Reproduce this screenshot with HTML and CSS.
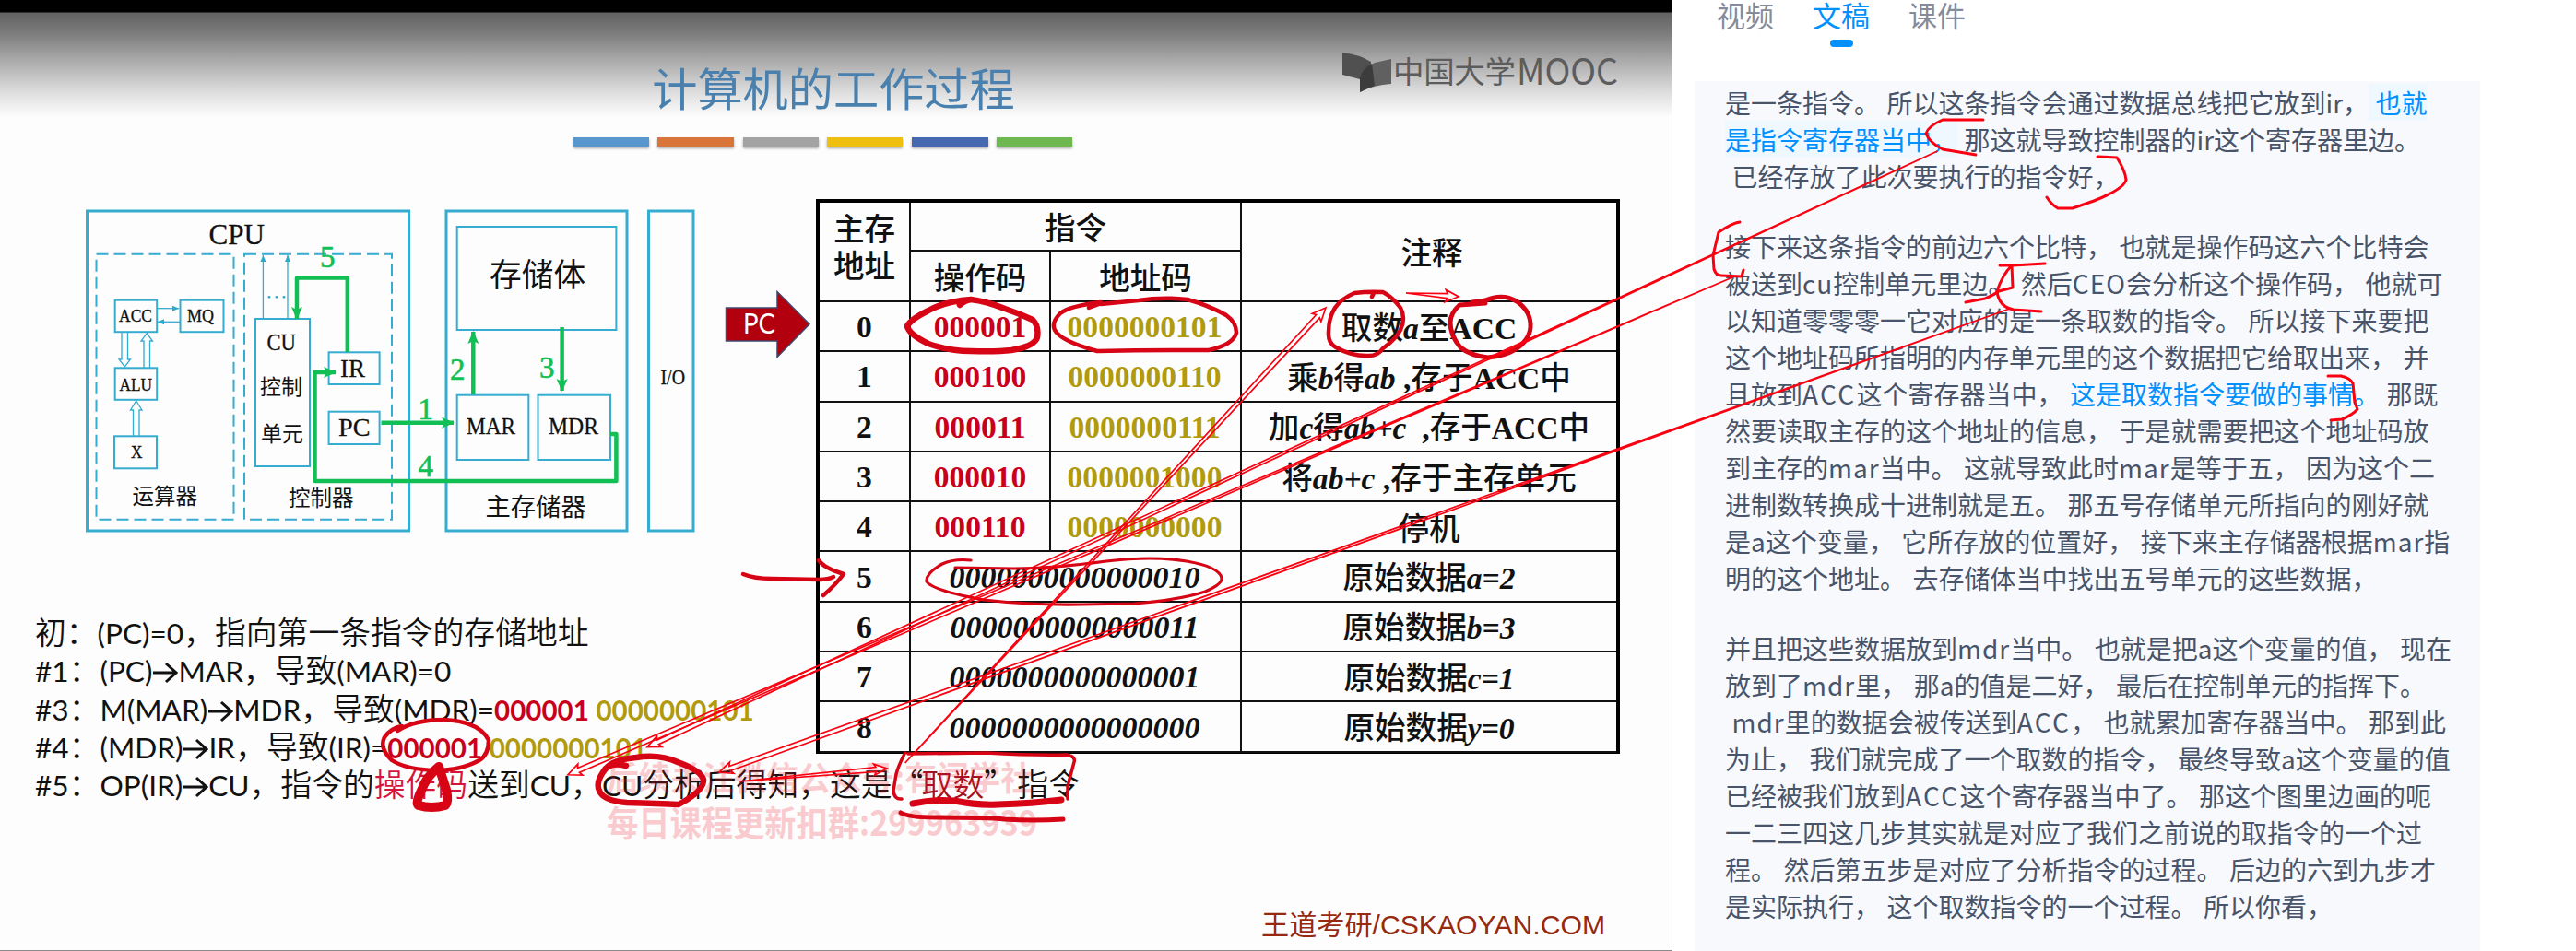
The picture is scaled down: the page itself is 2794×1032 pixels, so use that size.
FILE: index.html
```html
<!DOCTYPE html>
<html lang="zh-CN">
<head>
<meta charset="utf-8">
<title>计算机的工作过程</title>
<link rel="stylesheet" href="styles.css">
</head>
<body>
<main class="page">
  <section class="slide">
    <header class="slide-head">
      <h1 class="title">计算机的工作过程</h1>
      <svg class="logo" width="304" height="50" viewBox="1454 54 304 50">
        <path d="M1456 57Q1474 59 1487 67V88L1475 86L1456 81Z" fill="#505050"/>
        <path d="M1475 84Q1479 73 1491 68L1509 64V91Q1490 92 1475 100Z" fill="#606060"/>
        <path d="M1475 84Q1479 73 1488 69L1491 93Q1484 95 1475 100Z" fill="#3c3c3c"/>
        <text class="logo-text" x="1511" y="90" font-size="33.5" textLength="133">中国大学</text>
        <text class="logo-text" x="1645" y="92" font-size="39" textLength="110" lengthAdjust="spacingAndGlyphs">MOOC</text>
      </svg>
    </header>
    <div class="bars"><i class="b1"></i><i class="b2"></i><i class="b3"></i><i class="b4"></i><i class="b5"></i><i class="b6"></i></div>

    <div class="stage">
      <div class="left">
        <svg class="diagram" width="700" height="400" viewBox="60 216 700 400">
          <defs>
            <marker id="gh" markerUnits="userSpaceOnUse" markerWidth="16" markerHeight="14" refX="13" refY="6" orient="auto"><path d="M0 0L14 6L0 12L3 6Z" fill="#12bf55"/></marker>
            <marker id="bh" markerUnits="userSpaceOnUse" markerWidth="8" markerHeight="8" refX="7" refY="3" orient="auto"><path d="M0 0L7 3L0 6Z" fill="#2fa9c9"/></marker>
          </defs>
          <g class="box thick">
            <rect x="94.5" y="229" width="349" height="347"/><rect x="484" y="229" width="196" height="347"/><rect x="703.500" y="229" width="48.500" height="347"/>
          </g>
          <g class="box dashed"><rect x="104.500" y="275.700" width="149" height="288"/><rect x="265" y="275.700" width="160" height="288"/></g>
          <g class="box">
            <rect x="124.700" y="325.700" width="45.500" height="34.500"/><rect x="195.500" y="325.700" width="47" height="34.500"/>
            <rect x="124.700" y="399.300" width="45.500" height="34.500"/><rect x="124" y="473.300" width="46" height="35"/>
            <rect x="277" y="346" width="59" height="160"/><rect x="356.600" y="382.300" width="55" height="34.700"/><rect x="356.600" y="446.700" width="55" height="35.300"/>
            <rect x="495.700" y="246" width="172.700" height="112"/><rect x="495.700" y="428.700" width="77.600" height="70.300"/><rect x="583.500" y="428.700" width="78.500" height="70.300"/>
          </g>
          <g class="box thin">
            <path d="M285.400 346V277" marker-end="url(#bh)"/><path d="M312 346V277" marker-end="url(#bh)"/><path d="M170 334.700H194" marker-end="url(#bh)"/><path d="M195 349.300H171" marker-end="url(#bh)"/>
            <path d="M132 361V390H129L135.300 398L141.500 390H138.500V361M156 399V370H153L159.300 361.500L165.500 370H162.500V399M144.500 473V445H141.500L147.700 435L154 445H151V473"/>
          </g>
          <g fill="#2fa9c9"><circle cx="292" cy="322.300" r="1.400"/><circle cx="300" cy="322.300" r="1.400"/><circle cx="308" cy="322.300" r="1.400"/></g>
          <g class="lbl">
            <text x="226.500" y="265" font-size="32" textLength="60.500" lengthAdjust="spacingAndGlyphs">CPU</text>
            <text x="129" y="349" font-size="19" textLength="36" lengthAdjust="spacingAndGlyphs">ACC</text>
            <text x="203" y="349" font-size="19" textLength="29" lengthAdjust="spacingAndGlyphs">MQ</text>
            <text x="129.500" y="423.500" font-size="19" textLength="35.500" lengthAdjust="spacingAndGlyphs">ALU</text>
            <text x="142" y="497" font-size="19" textLength="12.500" lengthAdjust="spacingAndGlyphs">X</text>
            <text x="289.500" y="379.500" font-size="25" textLength="31.500" lengthAdjust="spacingAndGlyphs">CU</text>
            <text x="369" y="409" font-size="28" textLength="27" lengthAdjust="spacingAndGlyphs">IR</text>
            <text x="367" y="472.500" font-size="28" textLength="34.500" lengthAdjust="spacingAndGlyphs">PC</text>
            <text x="506" y="471" font-size="25.500" textLength="53" lengthAdjust="spacingAndGlyphs">MAR</text>
            <text x="595" y="471" font-size="25.500" textLength="54" lengthAdjust="spacingAndGlyphs">MDR</text>
            <text x="716.500" y="417" font-size="23" textLength="26.500" lengthAdjust="spacingAndGlyphs">I/O</text>
          </g>
          <g class="lbl cjk">
            <text x="143.500" y="546.500" font-size="23.500">运算器</text><text x="313" y="549" font-size="23.500">控制器</text>
            <text x="282" y="428" font-size="23">控制</text><text x="283" y="478.500" font-size="23">单元</text>
            <text x="531" y="311" font-size="34.700">存储体</text><text x="526.500" y="560" font-size="27.300">主存储器</text>
          </g>
          <g class="flow">
            <path d="M376.800 382V301.500H322V346" marker-end="url(#gh)"/><path d="M413.500 458.700H492" marker-end="url(#gh)"/>
            <path d="M513.300 428V360" marker-end="url(#gh)"/><path d="M609.600 355V424" marker-end="url(#gh)"/>
            <path d="M662 471H668.400V522H341.500V404H364" marker-end="url(#gh)"/>
          </g>
          <g class="num"><text x="347" y="290">5</text><text x="453.500" y="455">1</text><text x="488" y="411.500">2</text><text x="585" y="410">3</text><text x="453.500" y="517">4</text></g>
        </svg>
        <div class="notes">
          <p>初：<b>(PC)=0</b>，指向第一条指令的存储地址</p>
          <p><b>#1</b>：<b>(PC)</b><svg class="arr" viewBox="0 0 28 24"><path d="M1 12H25M15 2L26 12L15 22"/></svg><b>MAR</b>，导致<b>(MAR)=0</b></p>
          <p><b>#3</b>：<b>M(MAR)</b><svg class="arr" viewBox="0 0 28 24"><path d="M1 12H25M15 2L26 12L15 22"/></svg><b>MDR</b>，导致<b>(MDR)=</b><b class="op">000001</b> <b class="ad">0000000101</b></p>
          <p><b>#4</b>：<b>(MDR)</b><svg class="arr" viewBox="0 0 28 24"><path d="M1 12H25M15 2L26 12L15 22"/></svg><b>IR</b>，导致<b>(IR)=</b><b class="op">000001</b> <b class="ad">0000000101</b></p>
          <p><b>#5</b>：<b>OP(IR)</b><svg class="arr" viewBox="0 0 28 24"><path d="M1 12H25M15 2L26 12L15 22"/></svg><b>CU</b>，指令的<span class="red">操作码</span>送到<b>CU</b>，<b>CU</b>分析后得知，这是<span class="q">“</span><span class="dark">取数</span><span class="q2">”</span>指令</p>
        </div>
      </div>
      <svg class="pc" width="105" height="180" viewBox="780 216 105 180">
        <path d="M787.500 334H843V316.500L878 351.700L843 387.500V370H787.500Z" fill="#b2000f" stroke="#3d4a6c" stroke-width="1.500"/>
        <text x="806" y="362" font-family="Lato, sans-serif" font-size="30" fill="#fff" textLength="35" lengthAdjust="spacingAndGlyphs">PC</text>
      </svg>
      <div class="mem">
        <div class="c addr-h">主存<br>地址</div><div class="c ins-h">指令</div><div class="c note-h">注释</div>
        <div class="c">操作码</div><div class="c">地址码</div>
        <div class="c">0</div><div class="c op">000001</div><div class="c ad">0000000101</div><div class="c e"><span>取数<i>a</i>至<b>ACC</b></span></div>
        <div class="c">1</div><div class="c op">000100</div><div class="c ad">0000000110</div><div class="c e"><span>乘<i>b</i>得<i>ab</i><b> ,</b>存于<b>ACC</b>中</span></div>
        <div class="c">2</div><div class="c op">000011</div><div class="c ad">0000000111</div><div class="c e"><span>加<i>c</i>得<i>ab+c</i><b>  ,</b>存于<b>ACC</b>中</span></div>
        <div class="c">3</div><div class="c op">000010</div><div class="c ad">0000001000</div><div class="c e"><span>将<i>ab+c</i><b> ,</b>存于主存单元</span></div>
        <div class="c">4</div><div class="c op">000110</div><div class="c ad">0000000000</div><div class="c e">停机</div>
        <div class="c">5</div><div class="c data">0000000000000010</div><div class="c e"><span>原始数据<i>a=2</i></span></div>
        <div class="c">6</div><div class="c data">0000000000000011</div><div class="c e"><span>原始数据<i>b=3</i></span></div>
        <div class="c">7</div><div class="c data">0000000000000001</div><div class="c e"><span>原始数据<i>c=1</i></span></div>
        <div class="c">8</div><div class="c data">0000000000000000</div><div class="c e"><span>原始数据<i>y=0</i></span></div>
      </div>
    </div>
    <footer class="brand"><svg width="378" height="40" viewBox="1367 980 378 40"><text class="brand-text" x="1368" y="1014" font-size="29.500" textLength="373" lengthAdjust="spacingAndGlyphs">王道考研/CSKAOYAN.COM</text></svg></footer>
  </section>

  <aside class="panel">
    <nav class="tabs"><span>视频</span><span class="on">文稿</span><span>课件</span></nav>
    <article class="script">
      <p>是一条指令。 所以这条指令会通过数据总线把它放到ir，<mark> 也就</mark>
<mark>是指令寄存器当中，</mark> 那这就导致控制器的ir这个寄存器里边。
 已经存放了此次要执行的指令好，</p>
      <p>接下来这条指令的前边六个比特， 也就是操作码这六个比特会
被送到<s>cu</s>控制单元里边。 然后<s>CEO</s>会分析这个操作码， 他就可
以知道零零零一它对应的是一条取数的指令。 所以接下来要把
这个地址码所指明的内存单元里的这个数据把它给取出来， 并
且放到<u>ACC</u>这个寄存器当中， <em>这是取数指令要做的事情。</em> 那既
然要读取主存的这个地址的信息， 于是就需要把这个地址码放
到主存的<s>mar</s>当中。 这就导致此时<s>mar</s>是等于五， 因为这个二
进制数转换成十进制就是五。 那五号存储单元所指向的刚好就
是a这个变量， 它所存放的位置好， 接下来主存储器根据<s>mar</s>指
明的这个地址。 去存储体当中找出五号单元的这些数据，</p>
      <p>并且把这些数据放到<s>mdr</s>当中。 也就是把a这个变量的值， 现在
放到了<s>mdr</s>里， 那a的值是二好， 最后在控制单元的指挥下。
 <s>mdr</s>里的数据会被传送到<u>ACC</u>， 也就累加寄存器当中。 那到此
为止， 我们就完成了一个取数的指令， 最终导致a这个变量的值
已经被我们放到<u>ACC</u>这个寄存器当中了。 那这个图里边画的呃
一二三四这几步其实就是对应了我们之前说的取指令的一个过
程。 然后第五步是对应了分析指令的过程。 后边的六到九步才
是实际执行， 这个取数指令的一个过程。 所以你看，</p>
    </article>
  </aside>

  <svg class="ink" width="2794" height="1032" viewBox="0 0 2794 1032">
    <g class="mark">
      <text x="658" y="858" font-size="36" textLength="462" lengthAdjust="spacingAndGlyphs">后续关注微信公众号:有闻学社</text>
      <text x="658" y="907" font-size="38" textLength="467" lengthAdjust="spacingAndGlyphs">每日课程更新扣群:299963939</text>
    </g>
    <g class="pen">
      <path stroke-width="6.500" d="M1041 331Q1046 326 1053 325Q1025 327 1007 337Q987 347 984 354Q986 363 1007 373Q1030 381 1053 381Q1080 382 1097 380Q1122 376 1125 366Q1127 354 1120 347Q1105 340 1090 335Q1070 327 1053 325"/>
      <path stroke-width="4.500" d="M1181 334L1192 330L1194 328Q1160 332 1150 340Q1140 350 1144 358Q1150 370 1190 381Q1250 380 1311 380Q1338 374 1341 361Q1341 350 1330 342Q1310 331 1288 325Q1260 322 1235 326L1194 330"/>
      <path stroke-width="4.500" d="M1488 322L1490 318M1469 318Q1455 324 1448 334Q1441 345 1441 360Q1440 372 1449 377Q1465 386 1482 386Q1494 387 1500 378Q1514 368 1519 358Q1525 345 1519 334Q1510 322 1500 317Q1485 316 1469 318"/>
      <path stroke-width="5" d="M1611 329L1597 330L1583 331Q1573 340 1573 350Q1573 364 1584 377Q1595 386 1614 388Q1632 386 1642 380Q1659 370 1660 355Q1661 338 1645 327Q1630 318 1611 326L1597 328"/>
      <path stroke-width="4.500" d="M806 623Q818 628 837 628L889 629Q898 629 904 626M888 608Q893 616 915 623Q905 636 893 646"/>
      <path stroke-width="3.200" d="M1053 608Q1035 606 1022 612Q1004 622 1005 631Q1010 640 1067 651Q1120 657 1173 656L1230 655Q1280 651 1307 642Q1326 634 1325 627Q1322 615 1287 609Q1250 603 1200 609Q1140 617 1100 617L1036 616"/>
      <path stroke-width="4.500" d="M431 793Q450 781 482 781Q520 783 530 803Q530 819 520 825Q500 836 473 836Q440 835 425 825Q411 812 417 800Q424 790 436 788"/>
      <path stroke-width="10" d="M476 832Q462 843 457 858Q450 872 454 874Q468 878 483 874Q487 870 484 857L476 832"/>
      <path stroke-width="6.500" d="M679 831Q660 826 654 838Q646 850 650 858Q654 869 680 871Q715 872 736 873Q764 858 763 846Q760 836 735 827Q715 818 690 822Q668 824 659 832"/>
      <path stroke-width="3.500" d="M981.500 817Q974 832 972 840L969 858Q970 868 978 867M985 818L1070 817Q1120 820 1157 819Q1167 821 1165 827L1158 853V867"/>
      <path stroke-width="7" d="M990 872Q1015 867 1035 869Q1060 874 1082 873Q1120 872 1151 868"/>
      <path stroke-width="5" d="M977 882Q985 887 1015 887Q1070 887 1090 889Q1120 891 1153 889"/>
    </g>
    <g class="arrow">
      <path transform="translate(2101.400 164) rotate(155.200)" d="M0 0L1529 -2.500L1527 -6.500L1541.600 0L1527 6.500L1529 2.500Z"/>
      <path transform="translate(1879 301) rotate(156.860)" d="M0 0L1361 -2.500L1359 -6.500L1373.500 0L1359 6.500L1361 2.500Z"/>
      <path transform="translate(2181.700 334.300) rotate(160.230)" d="M0 0L1477 -2.500L1475 -6.500L1489.500 0L1475 6.500L1477 2.500Z"/>
      <path transform="translate(981.600 828) rotate(-47.270)" d="M0 0L660 -2.500L658 -6.500L672.500 0L658 6.500L660 2.500Z"/>
      <path transform="translate(801.700 848) rotate(-5)" d="M0 0L149 -2.500L147 -6L160.900 0L147 6L149 2.500Z"/>
      <path transform="translate(1525 318) rotate(4)" d="M0 0L45 -2.500L43 -6.500L57.100 0L43 6.500L45 2.500Z"/>
    </g>
    <g class="bracket">
      <path d="M2151 130H2107Q2091 137 2089 145Q2093 155 2107 162L2143 168"/>
      <path d="M2275 170L2296 171Q2305 185 2306 195Q2304 205 2271 218L2248 226H2232Q2225 222 2220 214"/>
      <path d="M1887 241Q1879 242 1864 252L1858 277L1859 292Q1861 299 1867 299L1889 300L1891 293"/>
      <path d="M2169 288H2183L2218 286M2182 288L2183 312L2168 316Q2161 321 2153 324L2132 328M2182 288Q2172 298 2166 316Q2168 333 2184 336L2214 338"/>
      <path d="M2525 408H2539Q2549 410 2552 416L2554 437L2557 444Q2552 450 2540 455L2528 456"/>
    </g>
  </svg>
</main>
</body>
</html>
```

FILE: styles.css
```css
* { box-sizing: border-box; }
body { margin: 0; background: #fff; font-family: "Noto Sans CJK SC", sans-serif; }
.page { position: relative; display: flex; width: 2794px; height: 1032px; overflow: hidden; }
p, h1 { margin: 0; }

.slide {
  display: flex; flex-direction: column; flex: none; width: 1814px; height: 1032px;
  border-right: 1px solid #333; border-bottom: 1px solid #8a8a8a;
  background: linear-gradient(#000 0 13px, #626262 14px, #7c7c7c 36px, #b4b4b4 72px, #e0e0e0 102px, #fdfdfd 127px);
}
.slide-head { display: grid; grid-template-columns: 1fr auto 1fr; height: 149px; padding-right: 55px; padding-left: 50px; }
.title { grid-column: 2; padding-top: 58px; font-size: 49.200px; line-height: 72px; font-weight: 400; color: #4a80ae; }
.logo { justify-self: end; margin-top: 54px; }
.logo-text { font-family: "Noto Sans CJK SC", sans-serif; font-weight: 400; fill: #5c5c5c; }

.bars { display: grid; grid-template-columns: 82px 83px 82px 82px 83px 82px; column-gap: 9.400px; height: 10px; margin-left: 622px; }
.bars i { box-shadow: 0 2px 3px rgba(0, 0, 0, .35); }
.b1 { background: #5896ce; } .b2 { background: #da753a; } .b3 { background: #a3a3a3; }
.b4 { background: #efbf10; } .b5 { background: #4568b0; } .b6 { background: #6fb750; }

.stage { display: flex; align-items: flex-start; margin-top: 57px; padding-left: 60px; }
.left { flex: none; width: 720px; }
.diagram, .pc { display: block; flex: none; }
.box { fill: none; stroke: #35acd0; stroke-width: 2; }
.thick { stroke-width: 3; }
.thin { stroke-width: 1.300; }
.dashed { stroke-dasharray: 13 6; }
.lbl { font-family: "Liberation Serif", serif; fill: #111; stroke: #111; stroke-width: .3; }
.cjk { font-family: "Noto Sans CJK SC", sans-serif; stroke: none; }
.flow { fill: none; stroke: #12bf55; stroke-width: 4.500; stroke-linejoin: round; }
.num { font-family: "Liberation Serif", serif; font-size: 33px; fill: #12bf55; stroke: #12bf55; stroke-width: .6; }

.notes { margin: 48px 0 0 -22px; font-size: 33.800px; line-height: 41.250px; color: #111; font-weight: 350; white-space: nowrap; }
.notes p { height: 41.250px; }
.notes b { font-family: Lato, sans-serif; font-size: .935em; font-weight: 400; }
.notes .op, .notes .ad { font-size: .874em; font-weight: 700; }
.notes .arr { width: 28px; height: 24px; vertical-align: -2px; fill: none; stroke: #111; stroke-width: 3; }
.op { color: #c9001c; }
.ad { color: #b09a10; }
.red { color: #d5143c; }
.dark { color: #a50f22; }
.q { display: inline-block; width: 32px; text-align: right; }
.q2 { display: inline-block; width: 36px; }

.mem {
  display: grid; flex: none; width: 872px; border: 4px solid #000; border-bottom-width: 1px;
  grid-template-columns: 99px 152px 207px 1fr; grid-template-rows: 53px 55px; grid-auto-rows: 54.300px;
  font: 700 33.600px/40px "Liberation Serif", "Noto Sans CJK SC", serif; color: #111;
}
.c { display: flex; align-items: center; justify-content: center; border-right: 2px solid #111; border-bottom: 2px solid #111; white-space: pre; padding-top: 2px; }
.c:nth-child(-n+5) { font-weight: 500; font-family: "Noto Sans CJK SC", sans-serif; padding-top: 0; }
.e { font-weight: 500; font-family: "Noto Sans CJK SC", sans-serif; border-right: 0; }
.e i, .e b { font-family: "Liberation Serif", serif; font-weight: 700; }
.c.addr-h { grid-row: span 2; padding-bottom: 12px; }
.ins-h { grid-column: span 2; }
.c.note-h { grid-row: span 2; border-right: 0; padding-left: 6px; }
.mem .ad { padding-right: 2px; }
.data { grid-column: span 2; font-style: italic; font-size: 34px; padding-right: 2px; }

.brand { margin-top: auto; margin-bottom: 11px; padding-left: 1367px; height: 40px; }
.brand-text { font-family: "Liberation Sans", "Noto Sans CJK SC", sans-serif; fill: #96290f; }

.panel { flex: none; width: 876px; padding-left: 24px; }
.tabs { display: flex; gap: 42px; height: 88px; padding-left: 24px; font-size: 31px; line-height: 31px; color: #858b9b; }
.tabs .on { color: #0091ff; }
.tabs .on::after { content: ""; display: block; width: 25px; height: 8px; margin: 12px auto 0; border-radius: 4px; background: #0091ff; }
.script { height: 944px; padding: 3px 0 0 33px; background: #f8f9fd; font-size: 28px; line-height: 40px; color: #48546a; }
.script p { margin-bottom: 36px; white-space: pre; word-spacing: 1.200px; }
.script s, .script u { text-decoration: none; letter-spacing: 1px; }
.script u { letter-spacing: 2.300px; }
.script mark { color: #0091ff; background: #f0f8ff; }
.script em { color: #0091ff; font-style: normal; }

.ink { position: absolute; left: 0; top: 0; pointer-events: none; }
.mark { font-family: "Noto Sans CJK SC", sans-serif; font-weight: 700; fill: #ee2030; opacity: .22; }
.pen { fill: none; stroke: #d60414; stroke-linecap: round; stroke-linejoin: round; }
.arrow { fill: none; stroke: #fa0010; stroke-width: 1.700; }
.bracket { fill: none; stroke: #fa0010; stroke-width: 3; stroke-linecap: round; stroke-linejoin: round; }
```
